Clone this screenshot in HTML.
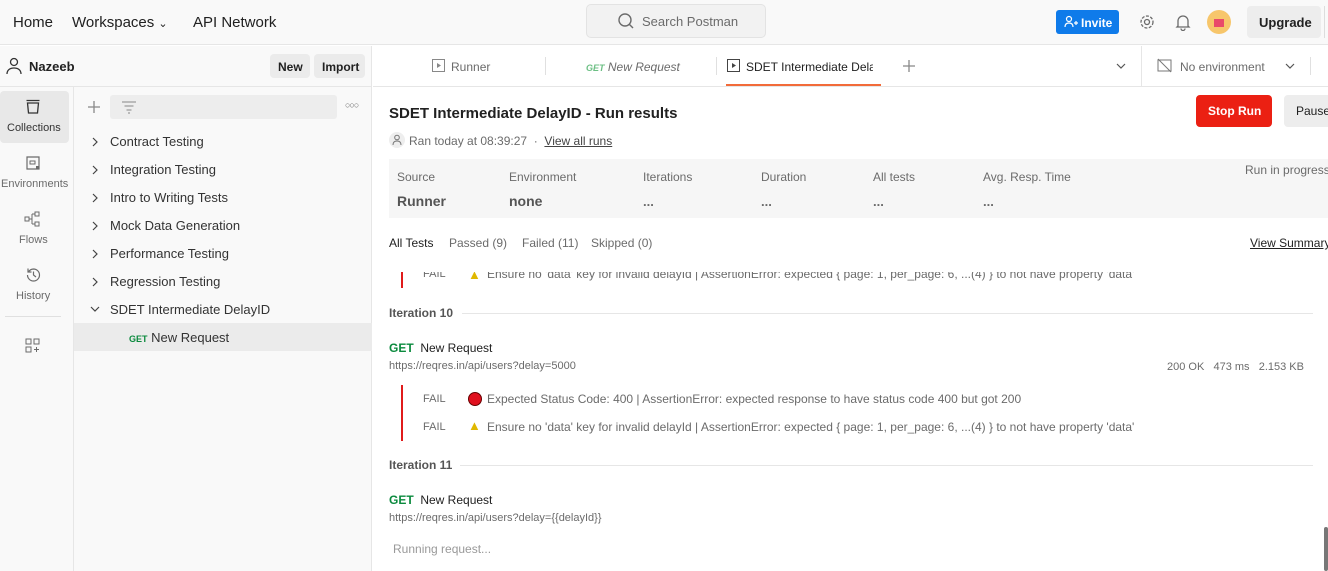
<!DOCTYPE html>
<html><head><meta charset="utf-8"><style>
*{box-sizing:border-box;margin:0;padding:0}
body{width:1328px;height:571px;overflow:hidden;font-family:"Liberation Sans",sans-serif;color:#212121;background:#fff;position:relative;font-size:13px}
.a{position:absolute;white-space:nowrap}
.g{color:#6b6b6b}
.fail{font-size:11px;color:#6b6b6b}
</style></head><body>
<!-- top bar -->
<div class="a" style="left:0;top:0;width:1328px;height:45px;background:#f9f9f9;border-bottom:1px solid #e6e6e6"></div>
<div class="a" style="left:13px;top:14px;font-size:15px">Home</div>
<div class="a" style="left:72px;top:14px;font-size:15px">Workspaces <span style="font-size:11px">&#8964;</span></div>
<div class="a" style="left:193px;top:14px;font-size:15px">API Network</div>
<div class="a" style="left:586px;top:4px;width:180px;height:34px;background:#f2f2f2;border:1px solid #e3e3e3;border-radius:5px"></div>
<svg class="a" style="left:617px;top:12px" width="18" height="18" viewBox="0 0 18 18"><circle cx="8" cy="8" r="6" fill="none" stroke="#6b6b6b" stroke-width="1.4"/><path d="M12.5 12.5L16 16" stroke="#6b6b6b" stroke-width="1.4"/></svg>
<div class="a g" style="left:642px;top:14px;font-size:13px">Search Postman</div>
<div class="a" style="left:1056px;top:10px;width:63px;height:24px;background:#0f7bea;border-radius:3px;color:#fff;font-weight:bold;font-size:12px;padding:6px 0 0 25px">Invite</div>
<svg class="a" style="left:1064px;top:15px" width="14" height="14" viewBox="0 0 14 14"><circle cx="5" cy="4" r="2.5" fill="none" stroke="#fff" stroke-width="1.2"/><path d="M1 12c0-3 2-4 4-4s4 1 4 4M10 8h4M12 6v4" fill="none" stroke="#fff" stroke-width="1.2"/></svg>
<svg class="a" style="left:1138px;top:13px" width="18" height="18" viewBox="0 0 18 18"><circle cx="9" cy="9" r="6" fill="none" stroke="#6b6b6b" stroke-width="1.3" stroke-dasharray="3 1.5"/><circle cx="9" cy="9" r="2.5" fill="none" stroke="#6b6b6b" stroke-width="1.3"/></svg>
<svg class="a" style="left:1175px;top:13px" width="16" height="18" viewBox="0 0 16 18"><path d="M3 13V8a5 5 0 0110 0v5l1 1H2zM6 15.5a2 2 0 004 0" fill="none" stroke="#6b6b6b" stroke-width="1.3"/></svg>
<div class="a" style="left:1207px;top:10px;width:24px;height:24px;border-radius:50%;background:#f7c66b"></div>
<div class="a" style="left:1214px;top:19px;width:10px;height:8px;background:#e94a6a"></div>
<div class="a" style="left:1247px;top:6px;width:74px;height:32px;background:#ededed;border-radius:4px;font-weight:bold;font-size:13px;padding:9px 0 0 12px">Upgrade</div>
<div class="a" style="left:1324px;top:6px;width:1px;height:32px;background:#ddd"></div>
<!-- left -->
<div class="a" style="left:0;top:46px;width:372px;height:525px;background:#f9f9f9;border-right:1px solid #e6e6e6"></div>
<div class="a" style="left:0;top:86px;width:372px;height:1px;background:#e6e6e6"></div>
<div class="a" style="left:73px;top:87px;width:1px;height:484px;background:#e6e6e6"></div>
<svg class="a" style="left:6px;top:57px" width="16" height="18" viewBox="0 0 16 18"><circle cx="8" cy="5" r="3.5" fill="none" stroke="#333" stroke-width="1.3"/><path d="M1 17c0-4 3-6 7-6s7 2 7 6" fill="none" stroke="#333" stroke-width="1.3"/></svg>
<div class="a" style="left:29px;top:59px;font-weight:bold;font-size:13px">Nazeeb</div>
<div class="a" style="left:270px;top:54px;width:40px;height:24px;background:#ebebeb;border-radius:4px;font-weight:bold;font-size:12px;padding:6px 0 0 8px">New</div>
<div class="a" style="left:314px;top:54px;width:51px;height:24px;background:#ebebeb;border-radius:4px;font-weight:bold;font-size:12px;padding:6px 0 0 8px">Import</div>
<div class="a" style="left:0;top:91px;width:69px;height:52px;background:#e8e8e8;border-radius:4px"></div>
<svg class="a" style="left:25px;top:99px" width="16" height="16" viewBox="0 0 16 16"><path d="M1.5 1.5h13M2.5 4h11l-1 10h-9z" fill="none" stroke="#333" stroke-width="1.3"/></svg>
<div class="a" style="left:7px;top:122px;font-size:11px;color:#333">Collections</div>
<svg class="a" style="left:25px;top:155px" width="16" height="16" viewBox="0 0 16 16"><path d="M2 2h12v12H2z" fill="none" stroke="#6b6b6b" stroke-width="1.2"/><path d="M5 6h5v3H5z" fill="none" stroke="#6b6b6b"/><rect x="11" y="11" width="3" height="3" fill="#6b6b6b"/></svg>
<div class="a g" style="left:1px;top:178px;font-size:11px">Environments</div>
<svg class="a" style="left:24px;top:211px" width="18" height="16" viewBox="0 0 18 16"><rect x="1" y="6" width="4" height="4" fill="none" stroke="#6b6b6b"/><rect x="11" y="1" width="4" height="4" fill="none" stroke="#6b6b6b"/><rect x="11" y="11" width="4" height="4" fill="none" stroke="#6b6b6b"/><path d="M5 8h3M8 3v10M8 3h3M8 13h3" fill="none" stroke="#6b6b6b"/></svg>
<div class="a g" style="left:19px;top:234px;font-size:11px">Flows</div>
<svg class="a" style="left:25px;top:267px" width="16" height="16" viewBox="0 0 16 16"><path d="M2.5 8a6 6 0 106-6 6 6 0 00-5 3M3 1.5V5h3.5M8.5 4.5V8l2.5 2" fill="none" stroke="#6b6b6b" stroke-width="1.2"/></svg>
<div class="a g" style="left:16px;top:290px;font-size:11px">History</div>
<div class="a" style="left:5px;top:316px;width:56px;height:1px;background:#e0e0e0"></div>
<svg class="a" style="left:25px;top:338px" width="16" height="16" viewBox="0 0 16 16"><rect x="1" y="1" width="5" height="5" fill="none" stroke="#6b6b6b"/><rect x="9" y="1" width="5" height="5" fill="none" stroke="#6b6b6b"/><rect x="1" y="9" width="5" height="5" fill="none" stroke="#6b6b6b"/><path d="M11.5 9v5M9 11.5h5" stroke="#6b6b6b"/></svg>
<!-- collections -->
<svg class="a" style="left:87px;top:100px" width="14" height="14"><path d="M7 1v12M1 7h12" stroke="#888" stroke-width="1.3"/></svg>
<div class="a" style="left:110px;top:95px;width:227px;height:24px;background:#ededed;border-radius:3px"></div>
<svg class="a" style="left:121px;top:100px" width="16" height="14" viewBox="0 0 16 14"><path d="M1 2h14M3.5 6h9M5.5 10h5M7 13h2" stroke="#888" stroke-width="1"/></svg>
<div class="a" style="left:345px;top:100px;font-size:9px;color:#666;letter-spacing:-1px">○○○</div>
<div class="a" style="left:110px;top:134px;line-height:16px;font-size:13px;color:#333">
<div style="height:28px">Contract Testing</div>
<div style="height:28px">Integration Testing</div>
<div style="height:28px">Intro to Writing Tests</div>
<div style="height:28px">Mock Data Generation</div>
<div style="height:28px">Performance Testing</div>
<div style="height:28px">Regression Testing</div>
<div style="height:28px">SDET Intermediate DelayID</div>
</div>
<svg class="a" style="left:90px;top:137px" width="10" height="180"><g fill="none" stroke="#444" stroke-width="1.2"><path d="M3 1l4 4-4 4"/><path d="M3 29l4 4-4 4"/><path d="M3 57l4 4-4 4"/><path d="M3 85l4 4-4 4"/><path d="M3 113l4 4-4 4"/><path d="M3 141l4 4-4 4"/><path d="M1 170l4 4 4-4"/></g></svg>
<div class="a" style="left:74px;top:323px;width:298px;height:28px;background:#ebebeb"></div>
<div class="a" style="left:129px;top:330px;font-size:13px;color:#333"><span style="color:#0b8a3e;font-size:9px;font-weight:bold">GET</span> New Request</div>
<!-- tabs -->
<div class="a" style="left:373px;top:86px;width:955px;height:1px;background:#e6e6e6"></div>
<svg class="a" style="left:432px;top:59px" width="13" height="13"><rect x=".5" y=".5" width="12" height="12" fill="none" stroke="#888"/><path d="M5 4l4 2.5-4 2.5z" fill="#888"/></svg>
<div class="a g" style="left:451px;top:60px;font-size:12px">Runner</div>
<div class="a" style="left:545px;top:57px;width:1px;height:18px;background:#e0e0e0"></div>
<div class="a g" style="left:586px;top:60px;font-size:12px;font-style:italic"><span style="color:#6cbf84;font-size:9px;font-weight:bold">GET</span> New Request</div>
<div class="a" style="left:716px;top:57px;width:1px;height:18px;background:#e0e0e0"></div>
<svg class="a" style="left:727px;top:59px" width="13" height="13"><rect x=".5" y=".5" width="12" height="12" fill="none" stroke="#444"/><path d="M5 4l4 2.5-4 2.5z" fill="#444"/></svg>
<div class="a" style="left:746px;top:60px;font-size:12px;width:127px;overflow:hidden">SDET Intermediate Delay</div>
<div class="a" style="left:726px;top:84px;width:155px;height:2px;background:#f26b3a"></div>
<svg class="a" style="left:902px;top:59px" width="14" height="14"><path d="M7 1v12M1 7h12" stroke="#888" stroke-width="1.3"/></svg>
<svg class="a" style="left:1116px;top:63px" width="10" height="6"><path d="M1 1l4 4 4-4" fill="none" stroke="#555" stroke-width="1.2"/></svg>
<div class="a" style="left:1141px;top:46px;width:1px;height:40px;background:#e6e6e6"></div>
<svg class="a" style="left:1157px;top:58px" width="15" height="15" viewBox="0 0 15 15"><rect x="1" y="2" width="13" height="11" fill="none" stroke="#777"/><path d="M1 1l13 13" stroke="#777"/></svg>
<div class="a g" style="left:1180px;top:60px;font-size:12px">No environment</div>
<svg class="a" style="left:1285px;top:63px" width="10" height="6"><path d="M1 1l4 4 4-4" fill="none" stroke="#555" stroke-width="1.2"/></svg>
<div class="a" style="left:1310px;top:57px;width:1px;height:18px;background:#e0e0e0"></div>
<!-- content header -->
<div class="a" style="left:389px;top:105px;font-size:15px;font-weight:bold;color:#212121">SDET Intermediate DelayID - Run results</div>
<div class="a" style="left:1196px;top:95px;width:76px;height:32px;background:#eb2013;border-radius:4px;color:#fff;font-weight:bold;font-size:12px;padding:9px 0 0 12px">Stop Run</div>
<div class="a" style="left:1284px;top:95px;width:60px;height:32px;background:#ededed;border-radius:4px;font-size:12px;padding:9px 0 0 12px">Pause</div>
<div class="a" style="left:389px;top:132px;width:16px;height:16px;border-radius:50%;background:#eee"></div>
<svg class="a" style="left:392px;top:134px" width="10" height="12" viewBox="0 0 10 12"><circle cx="5" cy="3.5" r="2.3" fill="none" stroke="#777"/><path d="M1 11c0-3 2-4 4-4s4 1 4 4" fill="none" stroke="#777"/></svg>
<div class="a g" style="left:409px;top:134px;font-size:12px">Ran today at 08:39:27 &nbsp;·&nbsp; <span style="text-decoration:underline;color:#444">View all runs</span></div>
<div class="a" style="left:389px;top:159px;width:939px;height:59px;background:#f6f6f6"></div>
<div class="a g" style="left:397px;top:170px;font-size:12px">Source</div><div class="a" style="left:397px;top:193px;font-size:14px;font-weight:bold;color:#555">Runner</div>
<div class="a g" style="left:509px;top:170px;font-size:12px">Environment</div><div class="a" style="left:509px;top:193px;font-size:14px;font-weight:bold;color:#555">none</div>
<div class="a g" style="left:643px;top:170px;font-size:12px">Iterations</div><div class="a g" style="left:643px;top:194px;font-weight:bold">...</div>
<div class="a g" style="left:761px;top:170px;font-size:12px">Duration</div><div class="a g" style="left:761px;top:194px;font-weight:bold">...</div>
<div class="a g" style="left:873px;top:170px;font-size:12px">All tests</div><div class="a g" style="left:873px;top:194px;font-weight:bold">...</div>
<div class="a g" style="left:983px;top:170px;font-size:12px">Avg. Resp. Time</div><div class="a g" style="left:983px;top:194px;font-weight:bold">...</div>
<div class="a g" style="left:1245px;top:163px;font-size:12px">Run in progress</div>
<div class="a" style="left:389px;top:236px;font-size:12px;color:#212121">All Tests</div>
<div class="a g" style="left:449px;top:236px;font-size:12px">Passed (9)</div>
<div class="a g" style="left:522px;top:236px;font-size:12px">Failed (11)</div>
<div class="a g" style="left:591px;top:236px;font-size:12px">Skipped (0)</div>
<div class="a" style="left:1250px;top:236px;font-size:12px;text-decoration:underline;color:#212121">View Summary</div>
<!-- results scroll area -->
<div class="a" style="left:373px;top:272px;width:955px;height:299px;overflow:hidden">
 <div class="a" style="left:28px;top:0;width:2px;height:16px;background:#e01b1b"></div>
 <div class="a fail" style="left:50px;top:-4px">FAIL</div>
 <div class="a" style="left:95px;top:-5px;font-size:13px;color:#e0b800">&#9650;</div>
 <div class="a g" style="left:114px;top:-5px;font-size:12px">Ensure no 'data' key for invalid delayId | AssertionError: expected { page: 1, per_page: 6, ...(4) } to not have property 'data'</div>
</div>
<div class="a" style="left:389px;top:306px;font-size:12px;font-weight:bold;color:#555">Iteration 10</div>
<div class="a" style="left:462px;top:313px;width:851px;height:1px;background:#e6e6e6"></div>
<div class="a" style="left:389px;top:341px;font-size:12px"><b style="color:#0b8a3e">GET</b>&nbsp;&nbsp;New Request</div>
<div class="a g" style="left:389px;top:360px;font-size:11px">https://reqres.in/api/users?delay=5000</div>
<div class="a g" style="left:1167px;top:361px;font-size:11px">200 OK &nbsp; 473 ms &nbsp; 2.153 KB</div>
<div class="a" style="left:401px;top:385px;width:2px;height:56px;background:#e01b1b"></div>
<div class="a fail" style="left:423px;top:393px">FAIL</div>
<div class="a" style="left:468px;top:392px;width:14px;height:14px;border-radius:50%;background:#e0101e;border:1px solid #600"></div>
<div class="a g" style="left:487px;top:392px;font-size:12px">Expected Status Code: 400 | AssertionError: expected response to have status code 400 but got 200</div>
<div class="a fail" style="left:423px;top:421px">FAIL</div>
<div class="a" style="left:468px;top:418px;font-size:13px;color:#e0b800">&#9650;</div>
<div class="a g" style="left:487px;top:420px;font-size:12px">Ensure no 'data' key for invalid delayId | AssertionError: expected { page: 1, per_page: 6, ...(4) } to not have property 'data'</div>
<div class="a" style="left:389px;top:458px;font-size:12px;font-weight:bold;color:#555">Iteration 11</div>
<div class="a" style="left:460px;top:465px;width:853px;height:1px;background:#e6e6e6"></div>
<div class="a" style="left:389px;top:493px;font-size:12px"><b style="color:#0b8a3e">GET</b>&nbsp;&nbsp;New Request</div>
<div class="a g" style="left:389px;top:512px;font-size:11px">https://reqres.in/api/users?delay={{delayId}}</div>
<div class="a" style="left:393px;top:542px;font-size:12px;color:#999">Running request...</div>
<div class="a" style="left:1324px;top:527px;width:4px;height:44px;background:#777;border-radius:2px"></div>
</body></html>
